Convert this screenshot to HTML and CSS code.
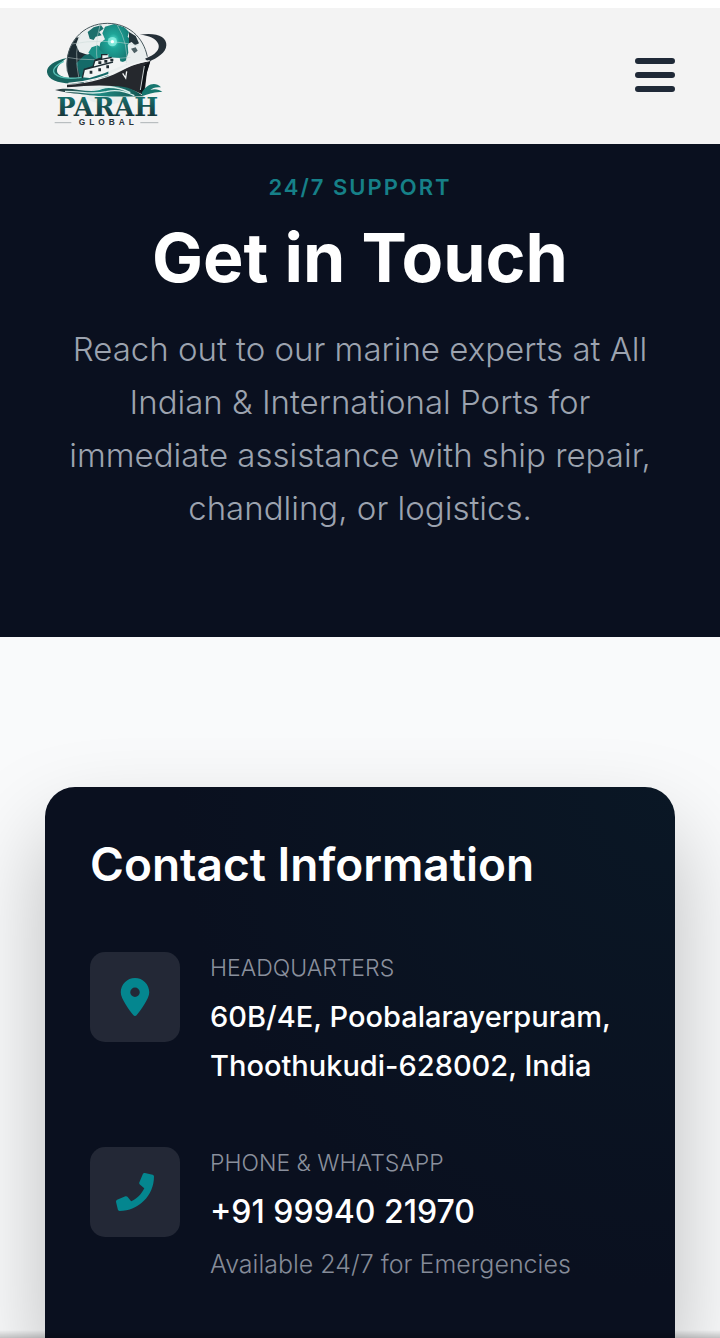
FILE: index.html
```
<!DOCTYPE html>
<html lang="en">
<head>
    <meta charset="UTF-8">
    <meta name="viewport" content="width=device-width, initial-scale=1.0">
    <title>Contact - Parah Global</title>
    <link rel="stylesheet" href="styles.css">
</head>
<body>
    <!-- Header -->
    <header class="site-header">
        <a href="#" class="logo" aria-label="Parah Global">
            <svg viewBox="46 66 372 318" width="124" height="106">
                <defs>
                    <radialGradient id="globe" cx="0.45" cy="0.42" r="0.6">
                        <stop offset="0" stop-color="#5fe8d6"/>
                        <stop offset="0.3" stop-color="#1fa598"/>
                        <stop offset="1" stop-color="#14746f"/>
                    </radialGradient>
                    <linearGradient id="sea" x1="0" x2="1">
                        <stop offset="0" stop-color="#2b3338"/>
                        <stop offset="0.5" stop-color="#1f8a83"/>
                        <stop offset="1" stop-color="#14524f"/>
                    </linearGradient>
                    <linearGradient id="word" x1="0" y1="0" x2="0" y2="1">
                        <stop offset="0" stop-color="#17807a"/>
                        <stop offset="1" stop-color="#16262c"/>
                    </linearGradient>
                    <clipPath id="round"><circle cx="233" cy="192" r="122"/></clipPath>
                </defs>
                <!-- globe -->
                <g clip-path="url(#round)">
                    <circle cx="233" cy="192" r="122" fill="#e9eeee"/>
                    <path d="M105 250V120l42-8-8 22 10 22 24 8 8 40-20 46z" fill="#1c2c33"/>
                    <path d="M140 190l24-24 24-6 20 14 28 4v50l-80 20z" fill="#146a68"/>
                    <path d="M174 96l18-14 22-6 8 10-14 10 8 10-18 4-6 10-12-4z" fill="#1b6f6c"/>
                    <path d="M176 158l10-16 18-6 12 8 14-6 10 12-12 20-30 8z" fill="#1c9187"/>
                    <path d="M226 80l28-8 30 10 14 14-4 14 10 10-10 16 2 22-8 24-30 12-28-8-6-24-16-14 4-20 14-10-8-18z" fill="url(#globe)"/>
                    <path d="M298 96l20 12 10 22-12 6-10-10-8 4z" fill="#24353b"/>
                    <path d="M304 146l14-4 6 10-10 8z" fill="#4d6064"/>
                    <path d="M112 172q60 14 190 0M126 132q90-18 200 4M158 88q-30 60-8 160M212 72q-18 60-8 120M262 74q36 60 28 120" fill="none" stroke="#c8d8d7" stroke-width="1.500"/>
                    <circle cx="248" cy="125" r="14" fill="#a9fff2" opacity="0.6"/>
                    <circle cx="248" cy="125" r="5" fill="#fff"/>
                </g>
                <path d="M113 214C102 130 160 70 233 70c62 0 108 40 120 100" fill="none" stroke="#47585d" stroke-width="3"/>
                <!-- orbit -->
                <path d="M330 104c50-8 82 6 80 32-1 22-26 38-54 50l-10-10c32-12 46-28 40-44-7-18-28-26-56-28z" fill="#242f37"/>
                <path d="M112 174c-38 8-62 24-60 43 3 28 50 38 100 31l8-14c-40 5-76-2-78-20-1-14 12-28 30-40z" fill="#18645f"/>
                <path d="M102 184c-28 14-36 28-26 38 14 12 46 15 80 10" fill="none" stroke="#58bdb3" stroke-width="4"/>
                <!-- ship -->
                <path d="M158 232l6-24 26-8 6-20 20-6v-10l20-2v10l34 2 2 10 22 6-70 30-44 14z" fill="#f1f4f4"/>
                <path d="M158 234l6-26 26-8 6-20 20-6v-10h18M196 182l50-10M166 208l84-22" fill="none" stroke="#1c2b31" stroke-width="4"/>
                <path d="M206 184h9v8h-9zM224 180h9v8h-9zM242 176h9v8h-9zM180 212h8v9h-8zM206 205h8v9h-8zM230 196h8v9h-8z" fill="#1f2b31"/>
                <path d="M112 254c70-2 130-22 180-50 20-10 42-16 70-22l-10 32-8 72c-60-34-130-34-232-24z" fill="#25282d"/>
                <path d="M116 250c70-4 120-22 172-48 20-10 42-16 72-20" fill="none" stroke="#f3f5f5" stroke-width="4"/>
                <path d="M279 220l9 14 3-20" fill="none" stroke="#f3f5f5" stroke-width="4"/>
                <path d="M344 196l18-12-12 40-10 64-10-18z" fill="#0d1217"/>
                <path d="M344 198l-12 72" stroke="#c8cfd0" stroke-width="3"/>
                <!-- waves -->
                <path d="M76 270c50-14 100 14 142-3 48-18 90-4 124 22-60 2-140 0-172-5-36-4-60-5-94-14z" fill="url(#sea)"/>
                <path d="M106 274c54 0 78 12 124 1 30-8 60 0 84 12M190 270c40-14 80-8 112 8" fill="none" stroke="#d7eeeb" stroke-width="4"/>
                <path d="M336 278c16-26 40-34 58-16-16-2-26 2-32 8 14-4 26-2 36 6-24-2-42 6-60 12z" fill="#17766f"/>
                <text x="233" y="347" text-anchor="middle" class="logo-name" fill="url(#word)">PARAH</text>
                <path d="M75 368h50M332 368h54" stroke="#8b9497" stroke-width="2"/>
                <text x="236" y="376" text-anchor="middle" class="logo-sub">GLOBAL</text>
            </svg>
        </a>
        <button type="button" class="menu-btn" aria-label="Open menu">
            <svg viewBox="0 0 40 34" width="40" height="34">
                <path d="M3 3h34M3 17h34M3 31h34" stroke="#1f2937" stroke-width="6" stroke-linecap="round"/>
            </svg>
        </button>
    </header>

    <!-- Hero -->
    <section class="hero">
        <span class="hero-tag">24/7 SUPPORT</span>
        <h1>Get in Touch</h1>
        <p>Reach out to our marine experts at All Indian &amp; International Ports for immediate assistance with ship repair, chandling, or logistics.</p>
    </section>

    <!-- Contact details -->
    <main class="contact">
        <div class="contact-card">
            <h2>Contact Information</h2>

            <div class="info-item">
                <div class="info-icon">
                    <svg viewBox="0 0 384 512" width="30" height="38">
                        <path fill="currentColor" d="M215.7 499.2C267 435 384 279.4 384 192 384 86 298 0 192 0S0 86 0 192c0 87.400 117 243 168.300 307.200 12.300 15.300 35.100 15.300 47.400 0zM192 128a64 64 0 1 1 0 128 64 64 0 1 1 0-128z"/>
                    </svg>
                </div>
                <div class="info-text">
                    <h3>HEADQUARTERS</h3>
                    <p class="address">60B/4E, Poobalarayerpuram, Thoothukudi-628002, India</p>
                </div>
            </div>

            <div class="info-item">
                <div class="info-icon">
                    <svg viewBox="0 0 512 512" width="38" height="38">
                        <path fill="currentColor" d="M493.400 24.600l-104-24c-11.300-2.600-22.900 3.300-27.500 13.900l-48 112c-4.200 9.800-1.400 21.300 6.900 28l60.600 49.600c-36 76.700-98.900 140.500-177.200 177.200l-49.600-60.600c-6.800-8.300-18.200-11.100-28-6.900l-112 48C3.900 366.500-2 378.100.6 389.400l24 104C27.100 504.200 36.700 512 48 512c256.100 0 464-207.500 464-464 0-11.200-7.700-20.900-18.600-23.400z"/>
                    </svg>
                </div>
                <div class="info-text">
                    <h3>PHONE &amp; WHATSAPP</h3>
                    <a href="tel:+919994021970" class="phone">+91 99940 21970</a>
                    <p class="note">Available 24/7 for Emergencies</p>
                </div>
            </div>
        </div>
    </main>
    <div class="bottom-shade"></div>
</body>
</html>
```
FILE: styles.css
```
* {
    box-sizing: border-box;
    margin: 0;
    padding: 0;
}

body {
    display: flex;
    flex-direction: column;
    min-height: 100vh;
    font-family: Inter, "Open Sans", sans-serif;
    background-color: #f9fafb;
    color: #fff;
}

/* Header */
.site-header {
    display: flex;
    align-items: center;
    justify-content: space-between;
    padding: 14px 45px 16px;
    border-top: 8px solid #fff;
    background-color: #f3f3f3;
}

.logo {
    display: block;
}

.logo svg,
.menu-btn svg {
    display: block;
}

.logo-name {
    font-family: "DejaVu Serif", serif;
    font-size: 76px;
    font-weight: bold;
}

.logo-sub {
    font-family: "Liberation Sans", sans-serif;
    font-size: 25px;
    font-weight: bold;
    letter-spacing: 12px;
    fill: #273238;
}

.menu-btn {
    border: none;
    background: none;
    cursor: pointer;
}

/* Hero */
.hero {
    padding: 26px 60px 102px;
    background-color: #0a101f;
    text-align: center;
}

.hero-tag {
    display: block;
    color: #168088;
    font-size: 22px;
    font-weight: 600;
    line-height: 34px;
    letter-spacing: 2px;
}

.hero h1 {
    margin: 11px 0 24px;
    font-size: 68px;
    font-weight: 700;
    line-height: 84px;
}

.hero p {
    color: #9ca3af;
    font-size: 33px;
    font-weight: 300;
    line-height: 53px;
}

/* Contact card */
.contact {
    display: flex;
    flex: 1;
    padding: 150px 45px 0;
    overflow: hidden;
}

.contact-card {
    flex: 1;
    padding: 45px 45px 53px;
    border-radius: 30px 30px 0 0;
    background: radial-gradient(circle at 100% 0, #0a1725, #0a101f 60%);
    box-shadow: 0 45px 90px rgba(0, 0, 0, 0.25);
}

.contact-card h2 {
    margin-bottom: 56px;
    font-size: 46px;
    font-weight: 600;
    line-height: 64px;
}

.info-item {
    display: flex;
    gap: 30px;
}

.info-item + .info-item {
    margin-top: 57px;
}

.info-icon {
    display: flex;
    flex-shrink: 0;
    align-items: center;
    justify-content: center;
    width: 90px;
    height: 90px;
    border-radius: 15px;
    background-color: #232836;
    color: #04868f;
}

.info-text {
    flex: 1;
}

.info-text h3 {
    margin-bottom: 8px;
    color: #8a909d;
    font-size: 23px;
    font-weight: 300;
    line-height: 32px;
}

.address {
    font-size: 29px;
    font-weight: 500;
    line-height: 49px;
}

.phone {
    display: block;
    color: #fff;
    font-size: 32px;
    font-weight: 500;
    line-height: 49px;
    text-decoration: none;
}

.note {
    margin-top: 8px;
    color: #858b98;
    font-size: 25px;
    font-weight: 300;
    line-height: 40px;
}

/* Soft edge along the bottom of the window */
.bottom-shade {
    position: fixed;
    right: 0;
    bottom: 0;
    left: 0;
    height: 8px;
    background: linear-gradient(rgba(0, 0, 0, 0), rgba(0, 0, 0, 0.2));
}
```
